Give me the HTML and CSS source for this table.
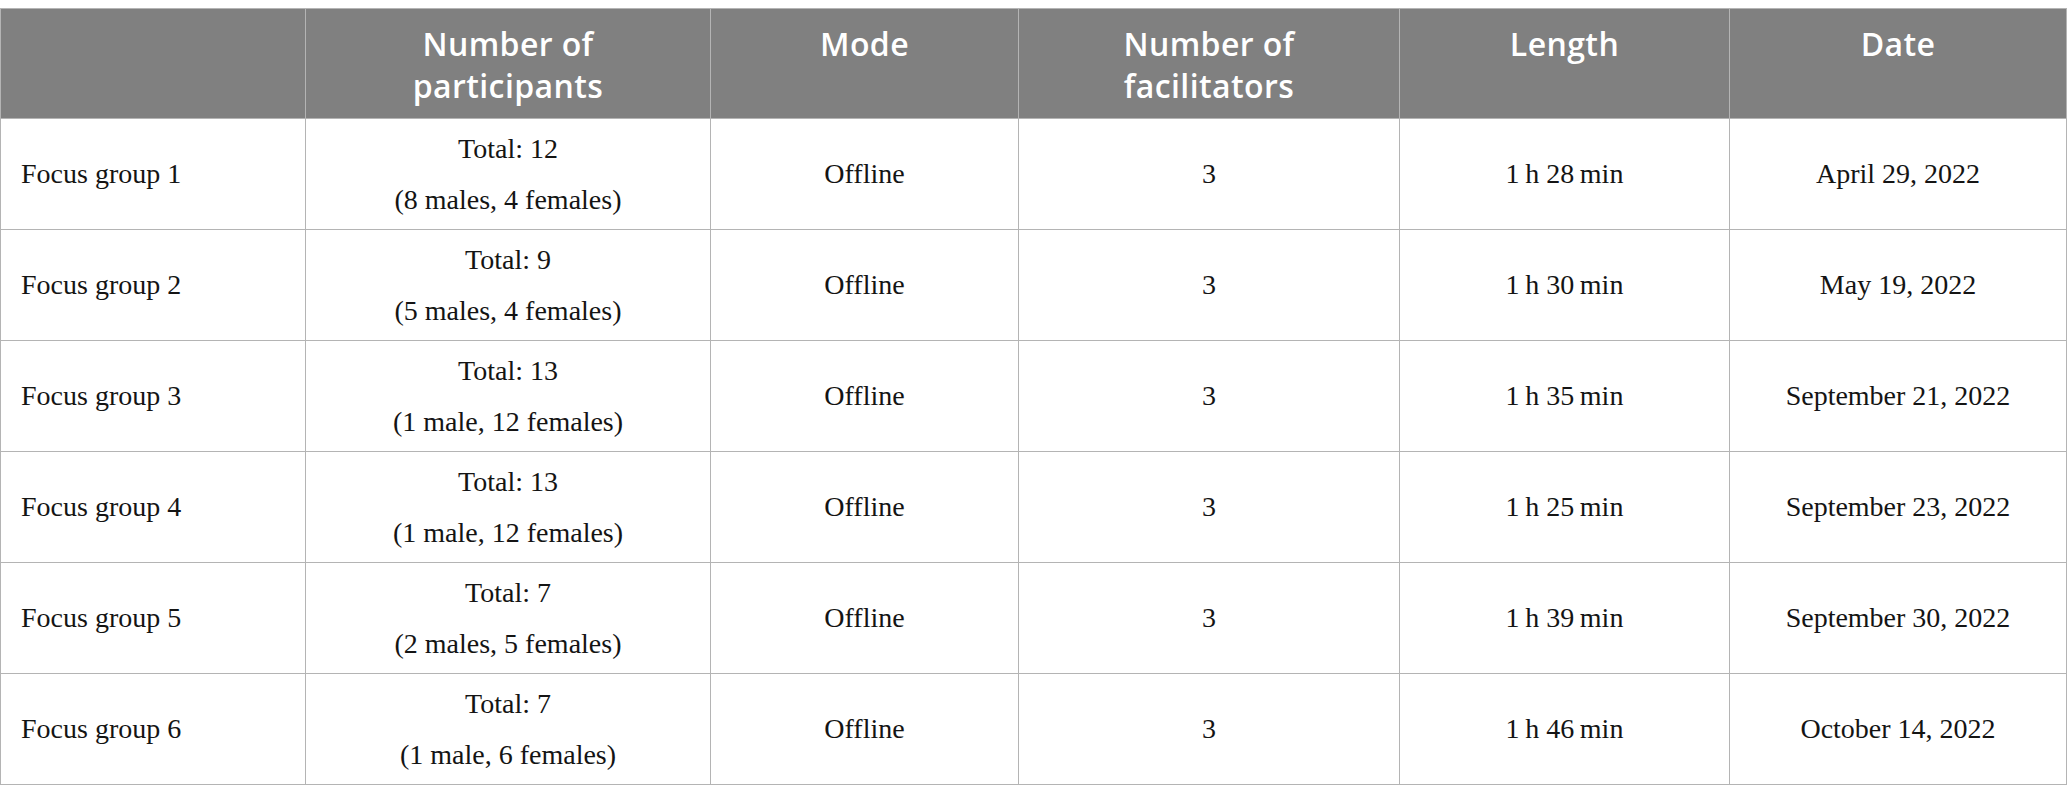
FILE: index.html
```html
<!DOCTYPE html>
<html lang="en">
<head>
<meta charset="utf-8">
<title>Focus groups</title>
<link rel="stylesheet" href="styles.css">
</head>
<body>
<div class="page">
<table class="data">
  <colgroup>
    <col class="c1"><col class="c2"><col class="c3"><col class="c4"><col class="c5"><col class="c6">
  </colgroup>
  <thead>
    <tr>
      <th></th>
      <th>Number of<br>participants</th>
      <th>Mode</th>
      <th>Number of<br>facilitators</th>
      <th>Length</th>
      <th>Date</th>
    </tr>
  </thead>
  <tbody>
    <tr>
      <td class="name">Focus group 1</td>
      <td><div class="ln">Total: 12</div><div class="ln">(8 males, 4 females)</div></td>
      <td>Offline</td>
      <td>3</td>
      <td>1&#8201;h 28&#8201;min</td>
      <td>April 29, 2022</td>
    </tr>
    <tr>
      <td class="name">Focus group 2</td>
      <td><div class="ln">Total: 9</div><div class="ln">(5 males, 4 females)</div></td>
      <td>Offline</td>
      <td>3</td>
      <td>1&#8201;h 30&#8201;min</td>
      <td>May 19, 2022</td>
    </tr>
    <tr>
      <td class="name">Focus group 3</td>
      <td><div class="ln">Total: 13</div><div class="ln">(1 male, 12 females)</div></td>
      <td>Offline</td>
      <td>3</td>
      <td>1&#8201;h 35&#8201;min</td>
      <td>September 21, 2022</td>
    </tr>
    <tr>
      <td class="name">Focus group 4</td>
      <td><div class="ln">Total: 13</div><div class="ln">(1 male, 12 females)</div></td>
      <td>Offline</td>
      <td>3</td>
      <td>1&#8201;h 25&#8201;min</td>
      <td>September 23, 2022</td>
    </tr>
    <tr>
      <td class="name">Focus group 5</td>
      <td><div class="ln">Total: 7</div><div class="ln">(2 males, 5 females)</div></td>
      <td>Offline</td>
      <td>3</td>
      <td>1&#8201;h 39&#8201;min</td>
      <td>September 30, 2022</td>
    </tr>
    <tr>
      <td class="name">Focus group 6</td>
      <td><div class="ln">Total: 7</div><div class="ln">(1 male, 6 females)</div></td>
      <td>Offline</td>
      <td>3</td>
      <td>1&#8201;h 46&#8201;min</td>
      <td>October 14, 2022</td>
    </tr>
  </tbody>
</table>
</div>
</body>
</html>
```

FILE: styles.css
```css
html, body {
  margin: 0;
  padding: 0;
  background: #ffffff;
}

.page {
  padding-top: 8px;
}

.data {
  border-collapse: collapse;
  table-layout: fixed;
  width: 2066px;
  font-family: "Liberation Serif", "Times New Roman", serif;
  font-size: 28px;
  color: #141414;
}

.c1 { width: 305px; }
.c2 { width: 405px; }
.c3 { width: 308px; }
.c4 { width: 381px; }
.c5 { width: 330px; }
.c6 { width: 337px; }

.data th,
.data td {
  border: 1px solid #b4b4b4;
}

.data th {
  background: #808080;
  color: #ffffff;
  font-family: "Open Sans", "Noto Sans", sans-serif;
  font-weight: 600;
  font-size: 32px;
  letter-spacing: 0.4px;
  line-height: 42px;
  text-align: center;
  vertical-align: top;
  padding: 14px 10px 11px;
  height: 84px;
}

.data td {
  text-align: center;
  vertical-align: middle;
  height: 110px;
  padding: 0 10px;
  line-height: 34px;
}

.data td.name {
  text-align: left;
  padding-left: 20px;
}

.ln {
  line-height: 51px;
}
```
